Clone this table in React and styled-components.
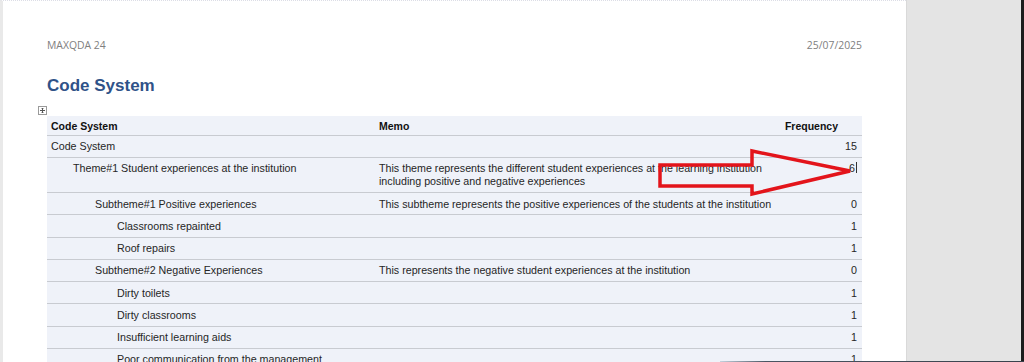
import React from "react";
import styled, { createGlobalStyle } from "styled-components";

const Global = createGlobalStyle`
  html, body { margin: 0; padding: 0; background: #ffffff; }
  body { font-family: "Liberation Sans", Arial, sans-serif; }
`;

const Screen = styled.div`
  position: relative;
  display: flex;
  width: 1024px;
  height: 362px;
  overflow: hidden;
  background: #ffffff;
`;

const Page = styled.div`
  flex: 0 0 906px;
  box-sizing: border-box;
  border-left: 3px solid #e9e9e9;
  border-top: 1px dotted #dcdde6;
  background: #ffffff;
  padding: 37px 0 0 44px;
  display: flex;
  flex-direction: column;
`;

const SidePanel = styled.div`
  flex: 1;
  background: #e4e4e4;
  border-left: 1px solid #d9d9d9;
`;

const EdgeStrip = styled.div`
  flex: 0 0 3px;
  background: #1c1c1c;
`;

const HeaderLine = styled.div`
  width: 815px;
  display: flex;
  justify-content: space-between;
  font-family: "Open Sans", "Liberation Sans", sans-serif;
  font-size: 10.4px;
  line-height: 14px;
  color: #808080;
`;

const Title = styled.h1`
  margin: 24px 0 0 0;
  font-family: "Liberation Sans", Arial, sans-serif;
  font-size: 17px;
  line-height: 20px;
  font-weight: 700;
  color: #2f5288;
`;

const Handle = styled.div`
  margin: 10px 0 1px -9px;
  width: 9px;
  height: 9px;
  display: flex;
`;

const Table = styled.table`
  width: 815px;
  border-collapse: collapse;
  table-layout: fixed;
  background: #eff2f9;
  font-family: "Liberation Sans", Arial, sans-serif;
  font-size: 10.7px;
  color: #262626;
`;

const HeadCell = styled.th`
  padding: 3.5px ${(p) => (p.$align === "right" ? "24px" : "4px")} 2px 4px;
  line-height: 13px;
  text-align: ${(p) => p.$align || "left"};
  font-weight: 700;
  font-size: 10.5px;
  color: #111;
  border-bottom: 1px solid #c8cbd1;
  white-space: nowrap;
`;

const Cell = styled.td`
  padding: 4.5px ${(p) => (p.$align === "right" ? "5px" : "4px")} 3.75px
    ${(p) => 4 + (p.$level || 0) * 22}px;
  line-height: 13px;
  vertical-align: top;
  text-align: ${(p) => p.$align || "left"};
  border-bottom: 1px solid #c8cbd1;
  white-space: nowrap;
  overflow: visible;
`;

const Caret = styled.span`
  display: inline-block;
  width: 1px;
  height: 11px;
  margin-left: 1px;
  vertical-align: -1px;
  background: #333;
`;

const ArrowSvg = styled.svg`
  position: absolute;
  left: 650px;
  top: 140px;
  pointer-events: none;
`;

const BottomBand = styled.div`
  position: absolute;
  left: 720px;
  right: 0;
  bottom: 0;
  height: 1.5px;
  background: linear-gradient(90deg, #c4d2de 0%, #4a5562 15%, #39424c 100%);
`;

const rows = [
  { name: "Code System", level: 0, memo: "", freq: "15" },
  {
    name: "Theme#1 Student experiences at the institution",
    level: 1,
    memo: [
      "This theme represents the different student experiences at the learning institution",
      "including positive and negative experiences",
    ],
    freq: "6",
    caret: true,
  },
  {
    name: "Subtheme#1 Positive experiences",
    level: 2,
    memo: "This subtheme represents the positive experiences of the students at the institution",
    freq: "0",
  },
  { name: "Classrooms repainted", level: 3, memo: "", freq: "1" },
  { name: "Roof repairs", level: 3, memo: "", freq: "1" },
  {
    name: "Subtheme#2 Negative Experiences",
    level: 2,
    memo: "This represents the negative student experiences at the institution",
    freq: "0",
  },
  { name: "Dirty toilets", level: 3, memo: "", freq: "1" },
  { name: "Dirty classrooms", level: 3, memo: "", freq: "1" },
  { name: "Insufficient learning aids", level: 3, memo: "", freq: "1" },
  { name: "Poor communication from the management", level: 3, memo: "", freq: "1" },
];

function Memo({ memo }) {
  if (Array.isArray(memo)) {
    return memo.map((line, i) => (
      <React.Fragment key={i}>
        {i > 0 && <br />}
        {line}
      </React.Fragment>
    ));
  }
  return memo;
}

export default function App() {
  return (
    <Screen>
      <Global />
      <Page>
        <HeaderLine>
          <span>MAXQDA 24</span>
          <span>25/07/2025</span>
        </HeaderLine>
        <Title>Code System</Title>
        <Handle>
          <svg width="9" height="9" viewBox="0 0 9 9">
            <rect x="0.5" y="0.5" width="8" height="8" fill="#fff" stroke="#9a9a9a" />
            <path d="M4.5 2 V7 M2 4.5 H7" stroke="#555" strokeWidth="1" />
            <path d="M3.5 3 L4.5 2 L5.5 3 M3.5 6 L4.5 7 L5.5 6" stroke="#555" strokeWidth="0.8" fill="none" />
          </svg>
        </Handle>
        <Table>
          <colgroup>
            <col style={{ width: "328px" }} />
            <col style={{ width: "405px" }} />
            <col style={{ width: "82px" }} />
          </colgroup>
          <thead>
            <tr>
              <HeadCell>Code System</HeadCell>
              <HeadCell>Memo</HeadCell>
              <HeadCell $align="right">Frequency</HeadCell>
            </tr>
          </thead>
          <tbody>
            {rows.map((r, i) => (
              <tr key={i}>
                <Cell $level={r.level}>{r.name}</Cell>
                <Cell>
                  <Memo memo={r.memo} />
                </Cell>
                <Cell $align="right">
                  {r.freq}
                  {r.caret && <Caret />}
                </Cell>
              </tr>
            ))}
          </tbody>
        </Table>
      </Page>
      <SidePanel />
      <EdgeStrip />
      <ArrowSvg width="215" height="65" viewBox="0 0 215 65">
        <path
          d="M10 25 L102 25 L102 11 L200 31 L102 54 L102 46 L10 46 Z"
          fill="none"
          stroke="#e3141b"
          strokeWidth="3.5"
          strokeLinejoin="miter"
        />
      </ArrowSvg>
      <BottomBand />
    </Screen>
  );
}
